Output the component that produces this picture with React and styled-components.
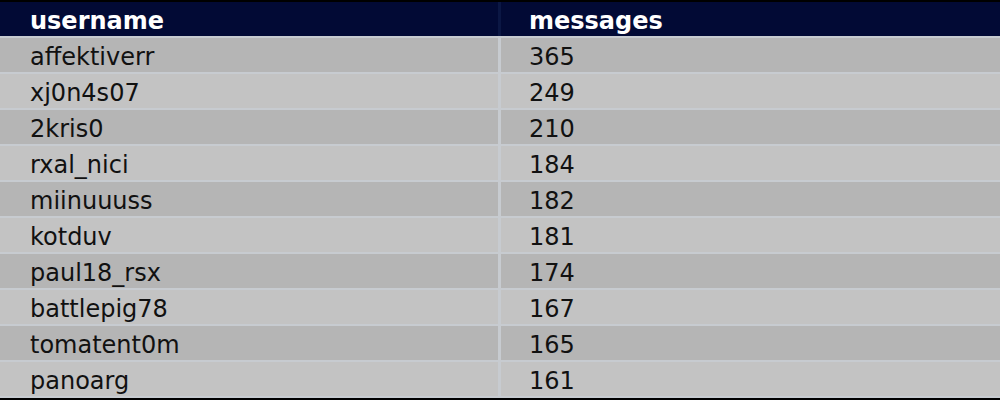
import styled, { createGlobalStyle } from "styled-components";

const GlobalStyle = createGlobalStyle`
    html, body {
        margin: 0;
        padding: 0;
        background: #000;
    }
    body {
        font-family: "DejaVu Sans", Verdana, sans-serif;
    }
`

const Page = styled.div`
    width: 1000px;
    height: 400px;
    padding-top: 2px;
    box-sizing: border-box;
    overflow: hidden;
`

const Table = styled.div`
    display: flex;
    flex-direction: column;
    gap: 2px;
    padding-bottom: 2px;
    background-color: #c7cbd0;
`

const Row = styled.div`
    display: grid;
    grid-template-columns: 498px 1fr;
    column-gap: 3px;
    height: 34px;
    background-color: ${({ $head }) => ($head ? "#0b1744" : "#c7cbd0")};
`

const Cell = styled.div`
    display: flex;
    align-items: center;
    padding-top: 4px;
    padding-left: ${({ $right }) => ($right ? "28px" : "30px")};
    box-sizing: border-box;
    font-size: 24px;
    line-height: 1;
    background-color: ${({ $head, $odd }) =>
        $head ? "#020a35" : $odd ? "#b5b5b5" : "#c3c3c3"};
    color: ${({ $head }) => ($head ? "#fff" : "#111")};
    font-weight: ${({ $head }) => ($head ? 700 : 400)};
`

const data = [
    ["affektiverr", 365],
    ["xj0n4s07", 249],
    ["2kris0", 210],
    ["rxal_nici", 184],
    ["miinuuuss", 182],
    ["kotduv", 181],
    ["paul18_rsx", 174],
    ["battlepig78", 167],
    ["tomatent0m", 165],
    ["panoarg", 161],
];

const App = () => {
    return (
        <Page>
            <GlobalStyle />
            <Table>
                <Row $head>
                    <Cell $head>username</Cell>
                    <Cell $head $right>messages</Cell>
                </Row>
                {data.map(([name, count], i) => (
                    <Row key={name}>
                        <Cell $odd={i % 2 === 0}>{name}</Cell>
                        <Cell $odd={i % 2 === 0} $right>{count}</Cell>
                    </Row>
                ))}
            </Table>
        </Page>
    );
};

export default App;
